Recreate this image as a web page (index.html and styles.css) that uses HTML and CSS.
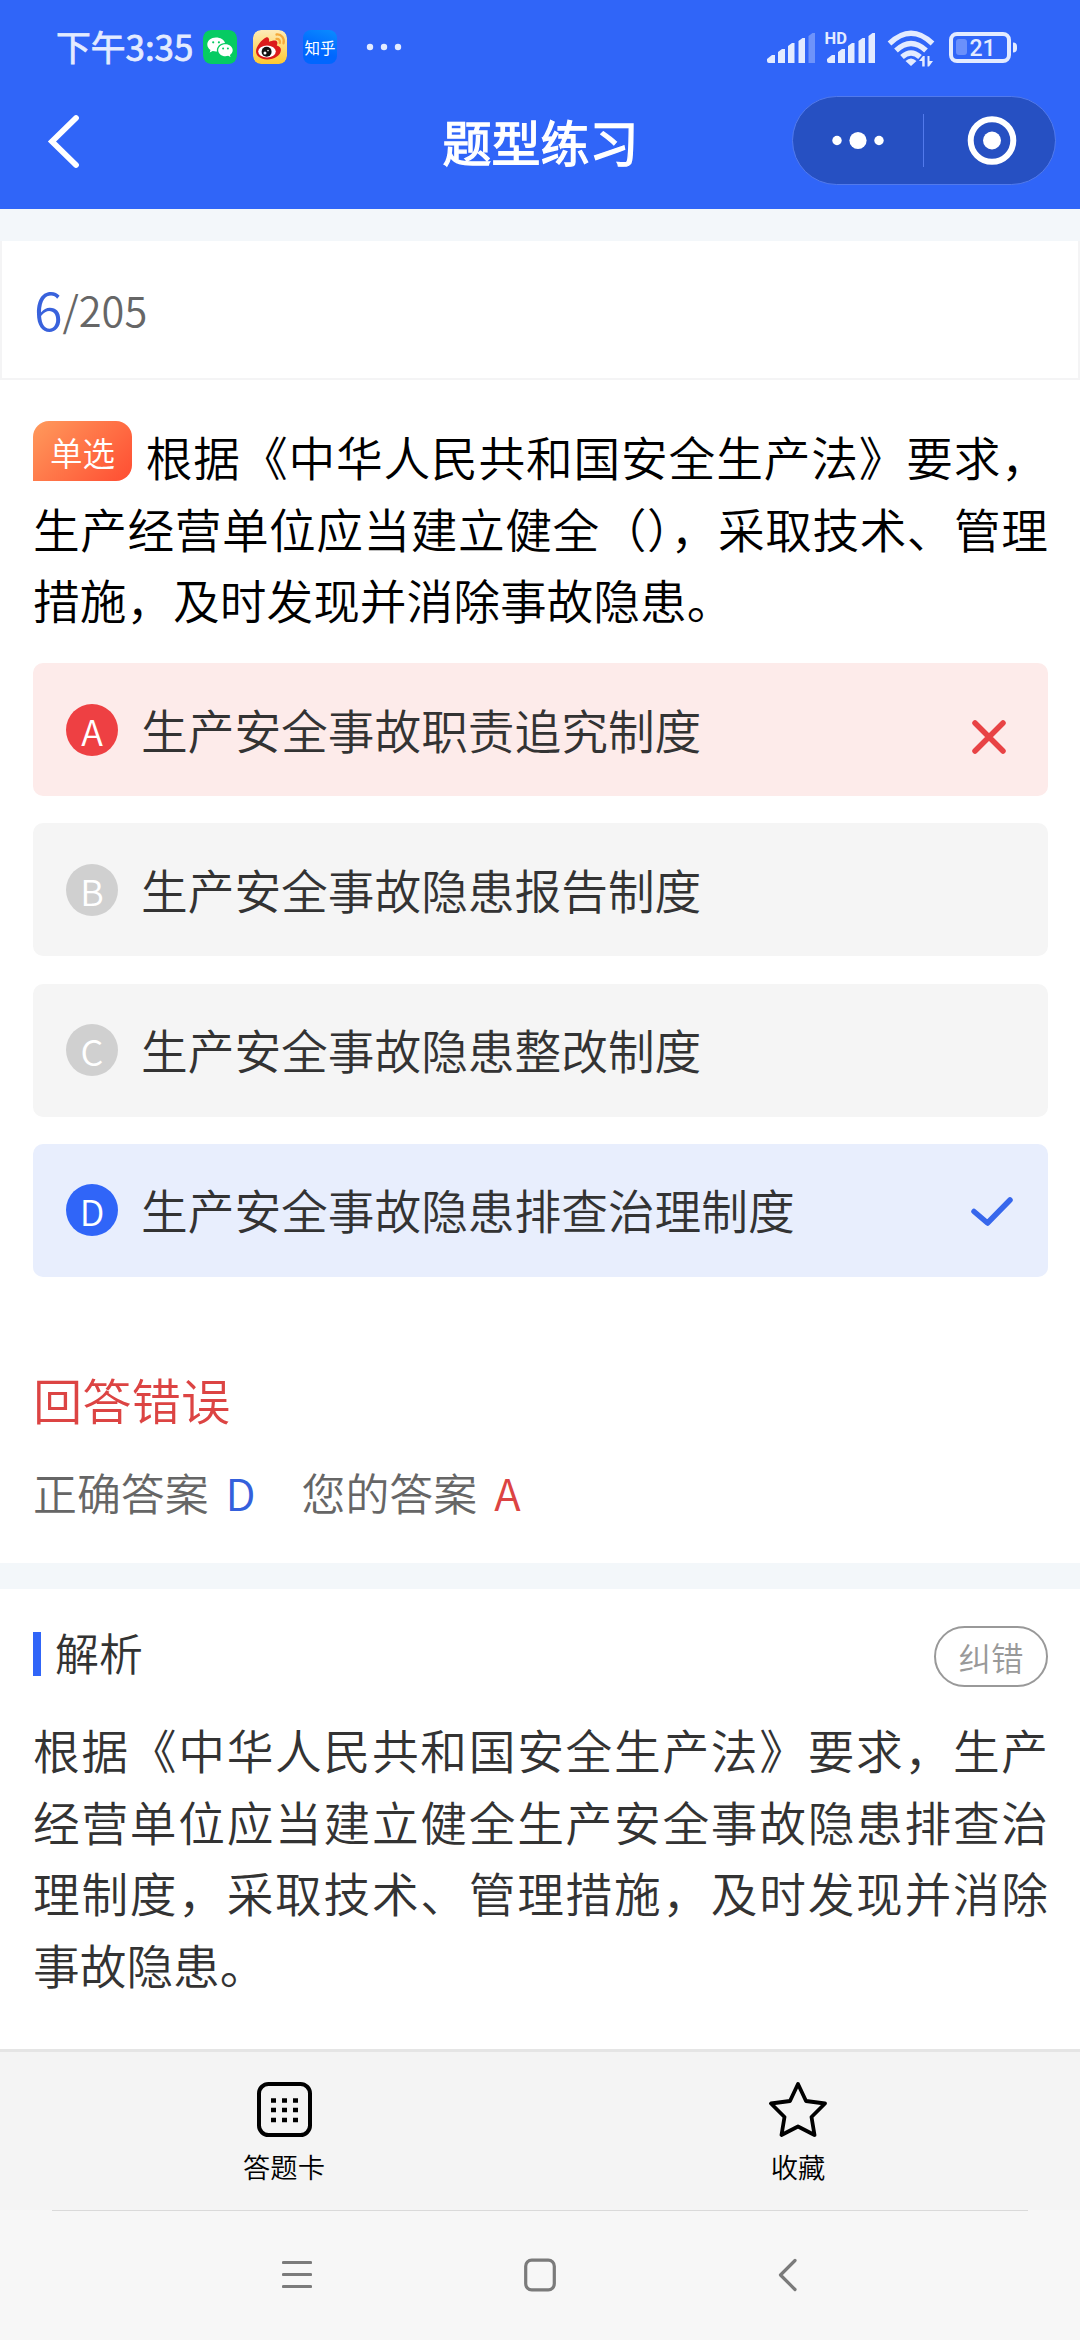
FILE: index.html
```html
<!DOCTYPE html>
<html lang="zh-CN">
<head>
<meta charset="utf-8">
<title>题型练习</title>
<link rel="stylesheet" href="styles.css">
</head>
<body>
<div class="screen">
  <header class="header">
    <div class="status">
      <span class="clock">下午3:35</span>
      <div class="apps">
        <svg class="app" viewBox="0 0 34 34"><rect width="34" height="34" rx="8" fill="#06cb62"/><path fill="#fff" d="M13 7.500c-5 0-8.700 3.100-8.700 7 0 2.300 1.200 4.200 3.200 5.500l-.8 2.600 3-1.500c1 .3 2.100.5 3.300.5h1c-.9-4.500 3-8.600 8-8.600-.8-3.300-4.600-5.500-9-5.500z"/><path fill="#fff" d="M22.500 14.200c-4.200 0-7.300 2.700-7.300 6s3.100 6 7.300 6c.9 0 1.800-.1 2.600-.4l2.500 1.300-.7-2.200c1.800-1.200 2.800-2.800 2.800-4.700 0-3.300-3.200-6-7.200-6z"/><g fill="#06cb62"><circle cx="10.200" cy="12.300" r="1.100"/><circle cx="15.900" cy="12.300" r="1.100"/><circle cx="20.100" cy="18.500" r="1"/><circle cx="24.900" cy="18.500" r="1"/></g></svg>
        <svg class="app" viewBox="0 0 34 34"><defs><linearGradient id="wb" x1="0" y1="0" x2="0" y2="1"><stop offset="0" stop-color="#fdebb8"/><stop offset="1" stop-color="#ffc931"/></linearGradient></defs><rect width="34" height="34" rx="8" fill="url(#wb)"/><path fill="#dc1b1b" d="M13 7.500c1.800-.9 3.800.5 3 4.300 3.500-1.600 7.500-2.200 8.200.2.400 1.200.1 2.200-.4 3.500 2.700.8 4.300 2.400 4.100 4.700-.4 5.200-6.600 9.200-13.700 9.200C7.500 29.400 3 26 3 21.300 3 16.500 8.500 9.800 13 7.500z"/><ellipse cx="14" cy="21.500" rx="8.800" ry="6.100" fill="#fff"/><circle cx="13.600" cy="21.700" r="5" fill="#111"/><circle cx="12" cy="23" r="1.500" fill="#fff"/><circle cx="15" cy="20.600" r=".8" fill="#fff"/><g fill="none" stroke="#f5a93a" stroke-width="2.300" stroke-linecap="round"><path d="M23.500 4.500c5-.6 8.300 4 7 8.800"/><path d="M23.500 8.900c2.500-.2 3.900 1.600 3.300 4"/></g></svg>
        <span class="app zhihu">知乎</span>
      </div>
      <svg class="more" width="36" height="8" viewBox="0 0 36 8" fill="#e3ebff"><circle cx="4" cy="4" r="3.200"/><circle cx="18" cy="4" r="3.200"/><circle cx="32" cy="4" r="3.200"/></svg>
      <svg class="signals" width="260" height="40" viewBox="765 27 260 40" fill="#e3ebff">
        <g id="bars"><path d="M767 61v-2l5-4h3v8h-6q-2 0-2-2zM778 63v-11l4-3h3v14zM788 63v-17l4-3h2.500v20zM798.500 63v-22l4-3h2.500v25z"/></g>
        <path d="M808.500 63v-27l4-3h2.500v30z" opacity=".35"/>
        <use href="#bars" x="60"/><path d="M868.500 63v-27l4-3h2.500v30z"/>
        <text class="hd" x="824.500" y="43.500">HD</text>
        <g fill="none" stroke="#e3ebff" stroke-width="5.400"><path d="M889.500 43.500q21.500-20.500 43 0"/><path d="M896 50.500q15-14 30 0"/><path d="M902 57q9-8 18 0"/></g>
        <path d="M905.500 61q5.500-5 11 0l-5.500 5zM919 61l4-5h1.700v10.500h-2.500v-5.500zM927.500 66.500v-10.500h2v5h3.500l-4 5.500z"/>
        <rect x="951" y="34" width="58" height="27" rx="6" fill="none" stroke="#e3ebff" stroke-width="4"/>
        <rect x="956" y="39" width="11" height="16" rx="3" fill="#6b90fb"/>
        <path d="M1013 42.500q4 0 4 4v2q0 4-4 4z"/>
        <text class="charge" x="969.500" y="56">21</text>
      </svg>
    </div>
    <div class="titlebar">
      <svg class="back" width="34" height="56" viewBox="0 0 34 56" fill="none" stroke="#fff" stroke-width="5.800" stroke-linecap="round"><path d="M29 5L5 28.500 29 52"/></svg>
      <h1 class="title">题型练习</h1>
      <svg class="capsule" width="264" height="89" viewBox="0 0 264 89"><rect x=".5" y=".5" width="263" height="88" rx="44" fill="#2650c2" stroke="#527aec"/><path d="M131.500 18v53" stroke="#527aec"/><g fill="#fff"><circle cx="45" cy="44.500" r="4.700"/><circle cx="66" cy="44.500" r="8.600"/><circle cx="87" cy="44.500" r="4.700"/><circle cx="200" cy="44.500" r="9"/></g><circle cx="200" cy="44.500" r="21.300" fill="none" stroke="#fff" stroke-width="6"/></svg>
    </div>
  </header>

  <section class="progress"><span class="current">6</span><span class="total">/205</span></section>

  <main class="quiz">
    <p class="question"><span class="tag">单选</span>根据《中华人民共和国安全生产法》要求，生产经营单位应当建立健全（），采取技术、管理措施，及时发现并消除事故隐患。</p>
    <ul class="options">
      <li class="option option-wrong"><span class="letter">A</span><span class="label">生产安全事故职责追究制度</span><svg class="mark cross" width="34" height="34" viewBox="0 0 34 34"><path d="M3 3l28 28M31 3L3 31"/></svg></li>
      <li class="option"><span class="letter">B</span><span class="label">生产安全事故隐患报告制度</span></li>
      <li class="option"><span class="letter">C</span><span class="label">生产安全事故隐患整改制度</span></li>
      <li class="option option-right"><span class="letter">D</span><span class="label">生产安全事故隐患排查治理制度</span><svg class="mark check" width="42" height="32" viewBox="0 0 42 32"><path d="M3 15.500L16.500 27 39 4"/></svg></li>
    </ul>
    <h2 class="verdict">回答错误</h2>
    <div class="answers"><span>正确答案</span><span class="right">D</span><span class="yours">您的答案</span><span class="wrong">A</span></div>
  </main>

  <section class="analysis">
    <div class="analysis-head"><h2 class="heading">解析</h2><button class="report">纠错</button></div>
    <p class="explain">根据《中华人民共和国安全生产法》要求，生产经营单位应当建立健全生产安全事故隐患排查治理制度，采取技术、管理措施，及时发现并消除事故隐患。</p>
  </section>

  <footer class="tabs">
    <a class="tab"><svg width="55" height="55" viewBox="0 0 55 55"><rect x="2" y="2" width="51" height="51" rx="9.500" fill="none" stroke="#000" stroke-width="4"/><path d="M14 18.500h27M14 28h27M14 38h27" stroke="#000" stroke-width="4.400" stroke-dasharray="5 6"/></svg>答题卡</a>
    <a class="tab"><svg width="58" height="55" viewBox="0 0 58 55"><path d="M29 2L37 19 56 21.500 42.500 35 45.500 53 29 44.500 12.500 53 15.500 35 2 21.500 21 19z" fill="none" stroke="#000" stroke-width="3.800" stroke-linejoin="round"/></svg>收藏</a>
  </footer>
  <nav class="sysnav">
    <svg width="30" height="34" viewBox="0 0 30 34"><path d="M1.500 4.500h27M1.500 16.500h27M1.500 28.500h27"/></svg>
    <svg width="32" height="34" viewBox="0 0 32 34"><rect x="1.700" y="2.200" width="28.600" height="29.600" rx="6"/></svg>
    <svg width="20" height="34" viewBox="0 0 20 34"><path d="M17 2.500L2.500 17 17 31.500"/></svg>
  </nav>
</div>
</body>
</html>
```

FILE: styles.css
```css
* { box-sizing: border-box; margin: 0; padding: 0; }
body { font-family: "Noto Sans CJK SC", sans-serif; font-weight: 350; color: #333; background: #f3f7fa; }
.screen { width: 1080px; height: 2340px; display: flex; flex-direction: column; overflow: hidden; }
svg { display: block; flex: none; }

.header { height: 209px; background: #3065f8; flex: none; }
.status { height: 94px; display: flex; align-items: center; padding: 0 55px 0 56px; color: #e3ebff; }
.clock { width: 147px; font-size: 34.800px; font-weight: 400; -webkit-text-stroke: .8px #e3ebff; white-space: nowrap; line-height: 40px; margin-top: -2px; }
.apps { display: flex; gap: 16px; }
.app { width: 34px; height: 34px; border-radius: 8px; }
.zhihu { background: linear-gradient(200deg, #0a8dff, #0066ff 60%); color: #fff; font-size: 15.500px; font-weight: 400; line-height: 34px; text-align: center; }
.more { margin-left: 29px; }
.signals { margin-left: auto; }
.hd { font: 700 16.500px Roboto, sans-serif; }
.charge { font: 500 23px Roboto, sans-serif; }
.titlebar { height: 94px; padding: 0 24px 0 47px; display: grid; grid-template-columns: 264px 1fr 264px; align-items: center; }
.title { color: #fff; font-size: 49px; font-weight: 400; -webkit-text-stroke: 1.300px #fff; line-height: 60px; text-align: center; padding-right: 22px; }
.capsule { margin-top: -2px; }

.progress { height: 139px; margin-top: 32px; background: #fff; border: 2px solid #f4f4f5; border-top: 0; padding: 0 0 2px 32px; display: flex; align-items: center; flex: none; }
.current { color: #3962dc; font-size: 52px; line-height: 60px; }
.total { color: #666; font-size: 41.500px; line-height: 60px; }

.quiz { background: #fff; height: 1183px; flex: none; padding: 40px 32px 0 33px; }
.question { height: 215px; font-size: 46.700px; line-height: 71.700px; color: #000; text-align: justify; }
.tag { display: inline-block; width: 99px; height: 60px; margin: -20px 13px 0 0; vertical-align: 10px; border-radius: 16px 16px 16px 0; background: linear-gradient(135deg, #ff9a5c, #ff4d32); color: #fff; font-size: 32.500px; line-height: 62px; text-align: center; }
.options { list-style: none; margin-top: 28px; display: grid; gap: 27.300px; }
.option { height: 133px; border-radius: 10px; background: #f5f5f5; display: flex; align-items: center; padding: 0 36px 0 33px; }
.option-wrong { background: #fdebea; }
.option-right { background: #e8eefd; }
.letter { width: 52px; height: 52px; border-radius: 50%; background: #d0d0d0; color: #fff; font-size: 36px; line-height: 52px; text-align: center; }
.option-wrong .letter { background: #ee4043; }
.option-right .letter { background: #3065f8; }
.label { margin: -2px 0 0 23px; font-size: 46.700px; line-height: 68px; }
.mark { margin-left: auto; fill: none; stroke-width: 5.500; stroke-linecap: round; stroke-linejoin: round; }
.cross { stroke: #e84345; margin-right: 6px; margin-top: 14px; }
.check { stroke: #3767ec; margin-right: -1px; margin-top: 3px; }
.verdict { margin-top: 85px; font-size: 49.300px; line-height: 74px; font-weight: 350; color: #dc4443; }
.answers { margin-top: 23px; display: flex; font-size: 43.900px; line-height: 66px; color: #666; }
.right { color: #3460dc; margin-left: 17px; }
.yours { margin-left: 46px; }
.wrong { color: #dc4443; margin-left: 17px; }

.analysis { margin-top: 26px; background: #fff; height: 460px; flex: none; padding: 37px 32px 0 33px; }
.analysis-head { display: flex; justify-content: space-between; }
.heading { margin-top: 6px; height: 44px; border-left: 8px solid #3065f8; padding-left: 14px; font-size: 43.900px; line-height: 41px; font-weight: 350; }
.report { width: 114px; height: 61px; border: 2px solid #999; border-radius: 31px; background: none; color: #999; font: 350 32.500px/56px "Noto Sans CJK SC", sans-serif; }
.explain { margin-top: 26px; font-size: 46.700px; line-height: 71.700px; text-align: justify; }

.tabs { height: 161px; flex: none; background: #f4f4f4; border-top: 3px solid #e5e5e5; padding: 30px 27px 0; display: grid; grid-template-columns: 514px 514px; }
.tab { display: flex; flex-direction: column; align-items: center; font-size: 27.300px; line-height: 40px; gap: 9px; color: #000; }
.sysnav { flex: 1; background: #f7f7f7; display: grid; grid-template-columns: 30px 32px 20px; column-gap: 212px; padding: 48px 0 0 282px; fill: none; stroke: #7b7b7b; stroke-width: 3.200; stroke-linecap: round; stroke-linejoin: round; position: relative; }
.sysnav::before { content: ""; position: absolute; left: 52px; right: 52px; top: 0; height: 1px; background: #dadada; }
.sysnav svg:last-child { margin-left: 10px; }
```
